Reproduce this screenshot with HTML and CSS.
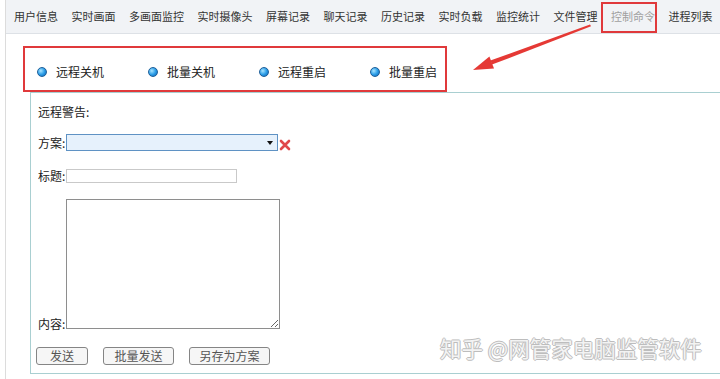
FILE: index.html
```html
<!DOCTYPE html>
<html lang="zh-CN">
<head>
    <meta charset="UTF-8">
    <meta name="viewport" content="width=device-width, initial-scale=1.0">
    <title>控制命令</title>
    <link rel="stylesheet" href="styles.css">
</head>
<body>

<div class="page">
    <ul class="tabs">
        <li>用户信息</li>
        <li>实时画面</li>
        <li>多画面监控</li>
        <li>实时摄像头</li>
        <li>屏幕记录</li>
        <li>聊天记录</li>
        <li>历史记录</li>
        <li>实时负载</li>
        <li>监控统计</li>
        <li>文件管理</li>
        <li class="active">控制命令</li>
        <li>进程列表</li>
    </ul>

    <!-- 命令选择 -->
    <div class="cmd-bar">
        <label class="cmd"><span class="dot"></span>远程关机</label>
        <label class="cmd"><span class="dot"></span>批量关机</label>
        <label class="cmd"><span class="dot"></span>远程重启</label>
        <label class="cmd"><span class="dot"></span>批量重启</label>
    </div>

    <div class="panel">
        <div class="panel-title">远程警告:</div>

        <div class="row row-plan">
            <label for="plan">方案:</label>
            <span class="select-wrap">
                <select id="plan"></select>
            </span>
            <svg class="del" width="12" height="12" viewBox="0 0 12 12">
                <path d="M2 2 L10 10 M10 2 L2 10" stroke="#e0474a" stroke-width="2.6" stroke-linecap="round"/>
            </svg>
        </div>

        <div class="row row-title">
            <label for="title">标题:</label>
            <input type="text" id="title">
        </div>

        <div class="row row-content">
            <label for="content">内容:</label>
            <textarea id="content"></textarea>
        </div>

        <div class="actions">
            <button class="btn btn-s">发送</button>
            <button class="btn btn-m">批量发送</button>
            <button class="btn btn-l">另存为方案</button>
        </div>
    </div>

    <div class="watermark">知乎 @网管家电脑监管软件</div>

    <svg class="arrow" width="720" height="379" viewBox="0 0 720 379">
        <polygon points="590,24.5 591,26.3 492,64.6 490.4,60.6" fill="#e53935"/>
        <polygon points="473,70 489.4,56.6 494,68.6" fill="#e53935"/>
    </svg>
</div>

</body>
</html>
```

FILE: styles.css
```css
html, body {
    margin: 0;
    padding: 0;
    background: #fff;
    overflow: hidden;
}
body {
    font-family: "Noto Sans CJK SC", "Liberation Sans", sans-serif;
    font-size: 12px;
    color: #222;
}
.page {
    position: relative;
    margin-left: 5px;
    border-left: 1px solid #dcdcdc;
    height: 379px;
}

/* 顶部标签 */
.tabs {
    display: flex;
    margin: 0;
    padding: 0 0 0 1.25px;
    list-style: none;
    height: 33px;
    background: #f1f3f6;
    border-bottom: 1px solid #dde1e6;
    overflow: hidden;
    white-space: nowrap;
}
.tabs li {
    position: relative;
    flex: none;
    padding: 0 6.75px;
    line-height: 33px;
    font-size: 11px;
    color: #333;
}
.tabs li.active {
    color: #a0a0a0;
}
.tabs li.active::after {
    content: "";
    position: absolute;
    left: -3px;
    right: 5px;
    top: 2px;
    bottom: 0;
    border: 2px solid #e0393b;
}

/* 命令选择 */
.cmd-bar {
    display: flex;
    box-sizing: border-box;
    width: 424px;
    margin: 12px 0 0 17px;
    padding: 16px 0 10px 12px;
    border: 2px solid #e0393b;
}
.cmd {
    display: flex;
    align-items: center;
    width: 111px;
    line-height: 16px;
    color: #222;
}
.cmd:last-child {
    width: auto;
}
.dot {
    width: 8px;
    height: 8px;
    margin-right: 9px;
    border-radius: 50%;
    border: 1px solid #1d5f9a;
    background: radial-gradient(circle at 35% 35%, #a8e4ff 0, #2e9fe8 50%, #0b62b3 100%);
}

/* 警告面板 */
.panel {
    margin-left: 24px;
    padding: 11px 0 8px 7px;
    border-top: 1px solid #a9cfd1;
    border-left: 1px solid #a9cfd1;
    border-bottom: 1px solid #a9cfd1;
}
.panel-title {
    line-height: 16px;
}
.row {
    display: flex;
    align-items: center;
}
.row label {
    width: 28px;
    line-height: 16px;
}
.row-plan {
    height: 17px;
    margin-top: 14px;
}
.row-title {
    height: 14px;
    margin-top: 18px;
}
.row-content {
    margin-top: 16px;
    align-items: flex-end;
}
.row-content label {
    margin-bottom: -3px;
}
.select-wrap {
    position: relative;
    display: block;
}
.select-wrap select {
    display: block;
    box-sizing: border-box;
    width: 212px;
    height: 17px;
    margin: 0;
    border: 1px solid #5f92c4;
    background: #e6f1fc;
    -webkit-appearance: none;
    appearance: none;
    border-radius: 0;
}
.select-wrap::after {
    content: "";
    position: absolute;
    right: 5px;
    top: 7px;
    border-left: 3px solid transparent;
    border-right: 3px solid transparent;
    border-top: 4px solid #111;
}
.del {
    margin: 5px 0 0 1px;
}
.row-title input {
    box-sizing: border-box;
    width: 171px;
    height: 14px;
    margin: 0;
    padding: 0 2px;
    border: 1px solid #c9c9c9;
}
.row-content textarea {
    box-sizing: border-box;
    width: 214px;
    height: 130px;
    margin: 0;
    border: 1px solid #8e8e8e;
}

/* 按钮 */
.actions {
    display: flex;
    margin: 18px 0 0 -2px;
}
.btn {
    box-sizing: border-box;
    height: 18px;
    margin: 0 15px 0 0;
    padding: 0;
    border: 1px solid #858585;
    border-radius: 3px;
    background: #f6f6f6;
    font-family: "Noto Sans CJK SC", "Liberation Sans", sans-serif;
    font-size: 12px;
    line-height: 16px;
    color: #555;
}
.btn-s {
    width: 52px;
}
.btn-m {
    width: 71px;
}
.btn-l {
    width: 81px;
}

/* 水印和标注 */
.watermark {
    position: absolute;
    left: 434px;
    top: 335px;
    font-size: 21.5px;
    line-height: 26px;
    color: #f3f3f3;
    text-shadow: -1px 0 #bdbdbd, 1px 0 #bdbdbd, 0 -1px #bdbdbd, 0 1px #bdbdbd;
    white-space: nowrap;
}
.arrow {
    position: absolute;
    left: -6px;
    top: 0;
    pointer-events: none;
}
```
